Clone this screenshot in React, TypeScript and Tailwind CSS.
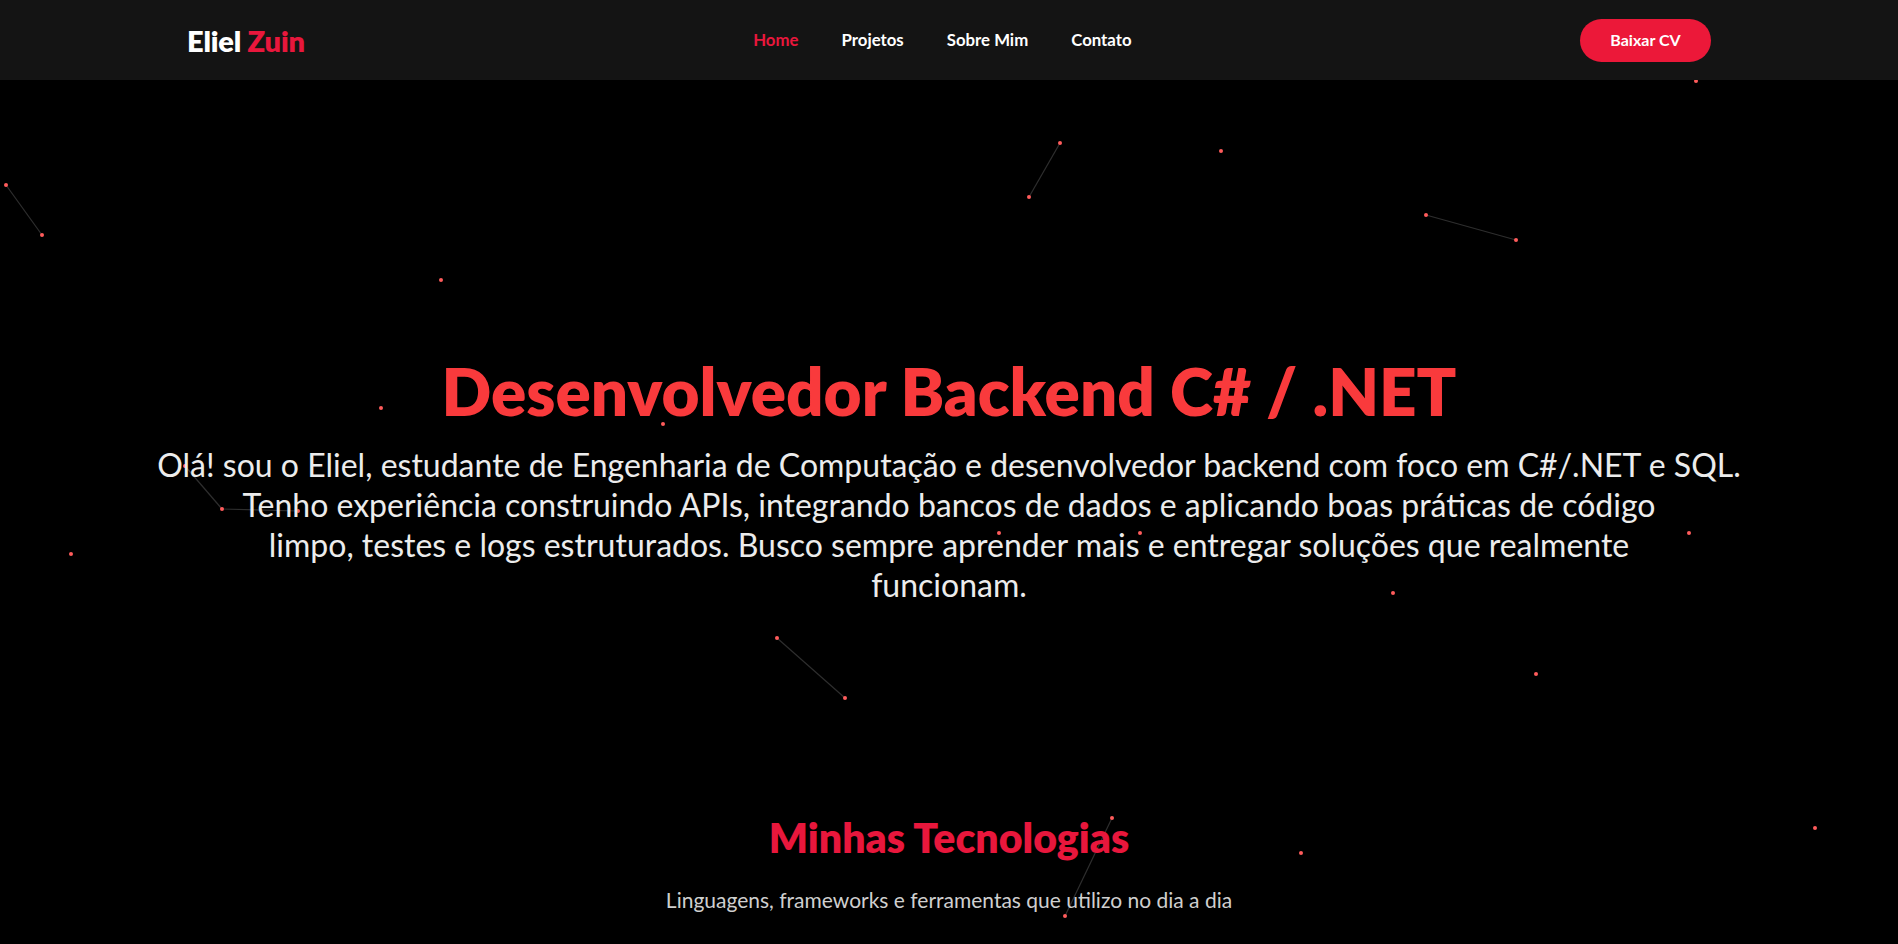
import React from "react";

const dots: [number, number][] = [
  [6, 185], [42, 235], [441, 280], [1060, 143], [1029, 197], [1221, 151],
  [1426, 215], [1516, 240], [1696, 81], [381, 408], [663, 424], [185, 466],
  [222, 509], [298, 511], [71, 554], [999, 533], [1140, 533], [1689, 533],
  [1393, 593], [777, 638], [845, 698], [1536, 674], [1112, 818], [1065, 916],
  [1301, 853], [1815, 828],
];

const lines: [number, number, number, number][] = [
  [6, 185, 42, 235],
  [1060, 143, 1029, 197],
  [1426, 215, 1516, 240],
  [185, 466, 222, 509],
  [222, 509, 298, 511],
  [777, 638, 845, 698],
  [1112, 818, 1065, 916],
];

function Particles() {
  return (
    <svg className="absolute left-0 top-0 pointer-events-none" width={1898} height={944} viewBox="0 0 1898 944">
      {lines.map((l, i) => (
        <line key={i} x1={l[0]} y1={l[1]} x2={l[2]} y2={l[3]} stroke="#2e2e2e" strokeWidth={1.2} />
      ))}
      {dots.map((d, i) => (
        <circle key={i} cx={d[0]} cy={d[1]} r={2} fill="#ff5c5c" />
      ))}
    </svg>
  );
}

export default function App() {
  return (
    <div className="relative min-h-screen w-full overflow-hidden bg-black" style={{ fontFamily: "Lato, 'Noto Sans', sans-serif" }}>
      <Particles />
      <nav className="relative z-10 flex h-[80px] w-full items-center bg-[#141414]">
        <div className="mx-auto flex w-[1524px] items-center justify-between">
          <div className="text-[29px] font-extrabold leading-none tracking-[-0.2px]">
            <span className="text-white">Eliel </span>
            <span className="text-[#e8173c]">Zuin</span>
          </div>
          <ul className="flex items-center gap-[43px] text-[16.8px] font-bold">
            <li className="text-[#e8173c]">Home</li>
            <li className="text-white">Projetos</li>
            <li className="text-white">Sobre Mim</li>
            <li className="text-white">Contato</li>
          </ul>
          <button className="flex h-[43px] w-[131px] items-center justify-center rounded-full bg-[#ec1839] text-[16px] font-bold text-white">
            Baixar CV
          </button>
        </div>
      </nav>

      <section className="relative z-10 flex flex-col items-center pt-[272px] text-center">
        <h1 className="text-[65.5px] font-extrabold leading-[77px] text-[#f93a3c]">
          Desenvolvedor Backend C# / .NET
        </h1>
        <p className="mt-[16px] text-[32px] leading-[40px] text-[#ececec]">
          Olá! sou o Eliel, estudante de Engenharia de Computação e desenvolvedor backend com foco em C#/.NET e SQL.
          <br />
          Tenho experiência construindo APIs, integrando bancos de dados e aplicando boas práticas de código
          <br />
          limpo, testes e logs estruturados. Busco sempre aprender mais e entregar soluções que realmente
          <br />
          funcionam.
        </p>
      </section>

      <section className="relative z-10 flex flex-col items-center pt-[211px] text-center">
        <h2 className="text-[41px] font-extrabold leading-[43px] text-[#e8173c]">Minhas Tecnologias</h2>
        <p className="mt-[27px] text-[21px] leading-[28px] text-[#cfcfcf]">
          Linguagens, frameworks e ferramentas que utilizo no dia a dia
        </p>
      </section>
    </div>
  );
}
